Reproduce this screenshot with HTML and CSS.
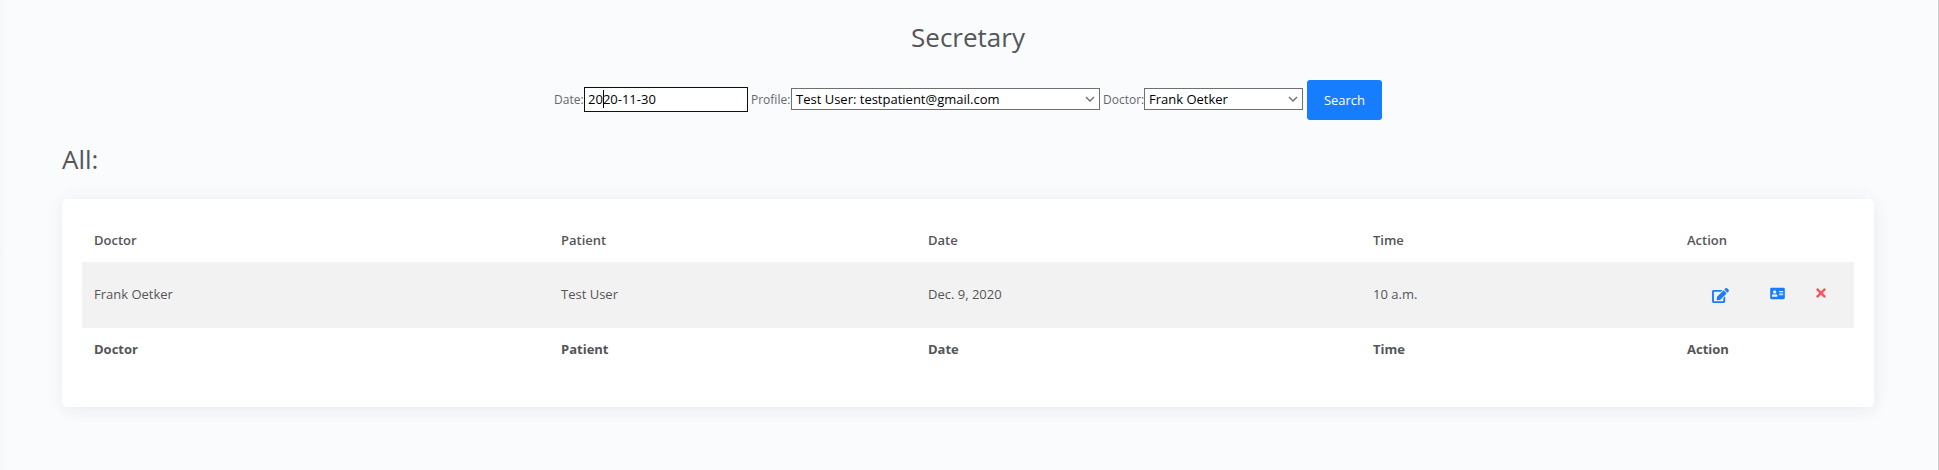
FILE: index.html
```html
<!DOCTYPE html>
<html lang="en">
<head>
<meta charset="utf-8">
<title>Secretary</title>
<link rel="stylesheet" href="styles.css">
</head>
<body>
<main class="page">
  <h1 class="title">Secretary</h1>
  <form class="filters">
    <label class="label label-date">Date:</label>
    <div class="field field-date"><span>20</span><i class="caret"></i><span>20-11-30</span></div>
    <label class="label label-profile">Profile:</label>
    <div class="field select select-profile"><span>Test User: testpatient@gmail.com</span>
      <svg class="chevron" viewBox="0 0 10 6"><path d="M1 1l4 4 4-4"/></svg></div>
    <label class="label label-doctor">Doctor:</label>
    <div class="field select select-doctor"><span>Frank Oetker</span>
      <svg class="chevron" viewBox="0 0 10 6"><path d="M1 1l4 4 4-4"/></svg></div>
    <button class="search" type="button">Search</button>
  </form>
  <h2 class="subtitle">All:</h2>
  <section class="card">
    <div class="row head"><span>Doctor</span><span>Patient</span><span>Date</span><span>Time</span><span>Action</span></div>
    <div class="row item"><span>Frank Oetker</span><span>Test User</span><span>Dec. 9, 2020</span><span>10 a.m.</span>
      <div class="actions">
        <svg class="icon edit" viewBox="0 0 576 512"><path d="M402.6 83.2l90.2 90.2c3.800 3.800 3.800 10 0 13.800L274.400 405.600l-92.800 10.300c-12.400 1.400-22.900-9.100-21.500-21.500l10.300-92.800L388.800 83.200c3.800-3.800 10-3.800 13.800 0zm162-22.900l-48.800-48.800c-15.200-15.200-39.900-15.200-55.200 0l-35.400 35.400c-3.800 3.800-3.800 10 0 13.800l90.200 90.200c3.800 3.800 10 3.800 13.800 0l35.400-35.400c15.200-15.300 15.200-40 0-55.200zM384 346.200V448H64V128h229.800c3.200 0 6.200-1.300 8.500-3.500l40-40c7.600-7.600 2.200-20.500-8.500-20.500H48C21.500 64 0 85.500 0 112v352c0 26.500 21.500 48 48 48h352c26.500 0 48-21.500 48-48V306.200c0-10.700-12.900-16-20.500-8.500l-40 40c-2.200 2.300-3.500 5.300-3.500 8.500z"/></svg>
        <svg class="icon id-card" viewBox="0 0 576 512"><path d="M528 32H48C21.500 32 0 53.500 0 80v352c0 26.500 21.500 48 48 48h480c26.500 0 48-21.500 48-48V80c0-26.500-21.500-48-48-48zm-352 96c35.300 0 64 28.700 64 64s-28.700 64-64 64-64-28.700-64-64 28.700-64 64-64zm112 236.800c0 10.600-10 19.200-22.400 19.200H86.400C74 384 64 375.400 64 364.800v-19.200c0-31.800 30.100-57.600 67.200-57.600h5c12.300 5.100 25.700 8 39.800 8s27.600-2.900 39.800-8h5c37.100 0 67.200 25.800 67.200 57.600v19.200zM512 312c0 4.400-3.600 8-8 8H360c-4.400 0-8-3.600-8-8v-16c0-4.400 3.600-8 8-8h144c4.400 0 8 3.600 8 8v16zm0-64c0 4.400-3.600 8-8 8H360c-4.400 0-8-3.600-8-8v-16c0-4.400 3.600-8 8-8h144c4.400 0 8 3.600 8 8v16zm0-64c0 4.400-3.600 8-8 8H360c-4.400 0-8-3.600-8-8v-16c0-4.400 3.600-8 8-8h144c4.400 0 8 3.600 8 8v16z"/></svg>
        <svg class="icon remove" viewBox="0 0 352 512"><path d="M242.700 256l100.100-100.100c12.300-12.300 12.300-32.200 0-44.500l-22.200-22.200c-12.300-12.300-32.200-12.300-44.500 0L176 189.300 75.900 89.200c-12.300-12.300-32.200-12.300-44.500 0L9.200 111.500c-12.300 12.300-12.300 32.200 0 44.500L109.300 256 9.200 356.100c-12.300 12.300-12.300 32.200 0 44.500l22.200 22.200c12.300 12.300 32.200 12.300 44.500 0L176 322.700l100.100 100.100c12.300 12.300 32.200 12.300 44.500 0l22.200-22.200c12.300-12.300 12.300-32.200 0-44.500L242.700 256z"/></svg>
      </div>
    </div>
    <div class="row foot"><span>Doctor</span><span>Patient</span><span>Date</span><span>Time</span><span>Action</span></div>
  </section>
</main>
</body>
</html>
```
FILE: styles.css
```css
* { box-sizing: border-box; }
body {
  margin: 0;
  height: 470px;
  overflow: hidden;
  background: #fafbfd;
  color: #575962;
  font-family: "Open Sans", sans-serif;
  font-size: 13px;
}
.page {
  height: 470px;
  padding: 19px 64px 0 62px;
  border-right: 1px solid #c8cacc;
  background: linear-gradient(to right, #f5f6f8, #fafbfd 6px);
}
.title, .subtitle { margin: 0; font-weight: 400; font-size: 26px; line-height: 36px; color: #54565a; }
.title { text-align: center; }
.filters {
  display: flex;
  align-items: center;
  height: 40px;
  margin-top: 25px;
  padding-left: 493px;
}
.label { flex: none; padding-bottom: 2px; font-size: 12px; color: #64676d; white-space: nowrap; }
.label-date { width: 29px; text-indent: -1px; }
.label-profile { width: 40px; margin-left: 3px; }
.label-doctor { width: 41px; margin-left: 3px; }
.field {
  display: flex;
  flex: none;
  align-items: center;
  background: #fff;
  color: #000;
  border: 1px solid #6f6f6f;
  white-space: nowrap;
}
.field-date { width: 164px; height: 25px; margin-bottom: 1px; padding: 0 0 1px 3px; border-color: #101010; }
.caret { width: 1px; height: 18px; margin-right: -1px; background: #000; }
.select { height: 22px; margin-bottom: 2px; padding: 0 4px; justify-content: space-between; }
.select-profile { width: 309px; }
.select-doctor { width: 159px; }
.chevron { width: 10px; height: 6px; fill: none; stroke: #767676; stroke-width: 1.5; }
.search {
  width: 75px;
  height: 40px;
  margin-left: 4px;
  padding: 0;
  border: 0;
  border-radius: 3px;
  background: #177dff;
  color: #fff;
  font: 13px "Open Sans", sans-serif;
}
.subtitle { margin-top: 21px; }
.card {
  height: 208px;
  margin-top: 22px;
  padding: 20px;
  border-radius: 5px;
  background: #fff;
  box-shadow: 2px 6px 15px rgba(69, 65, 78, .03), 0 0 20px rgba(69, 65, 78, .06);
}
.row {
  display: grid;
  grid-template-columns: 467px 367px 445px 314px 1fr;
  align-items: center;
  padding-left: 12px;
}
.row > span { padding-bottom: 2px; color: #555558; }
.head { height: 43px; font-weight: 600; }
.item { height: 66px; background: #f2f2f2; }
.foot { height: 43px; font-weight: 700; }
.actions { display: flex; align-items: center; padding-left: 25px; }
.icon { flex: none; fill: #177dff; }
.edit { width: 17px; height: 15px; }
.id-card { width: 15px; height: 13px; margin: -4px 0 0 41px; }
.remove { width: 10px; height: 14px; margin: -4px 0 0 31px; fill: #f25961; }
```
